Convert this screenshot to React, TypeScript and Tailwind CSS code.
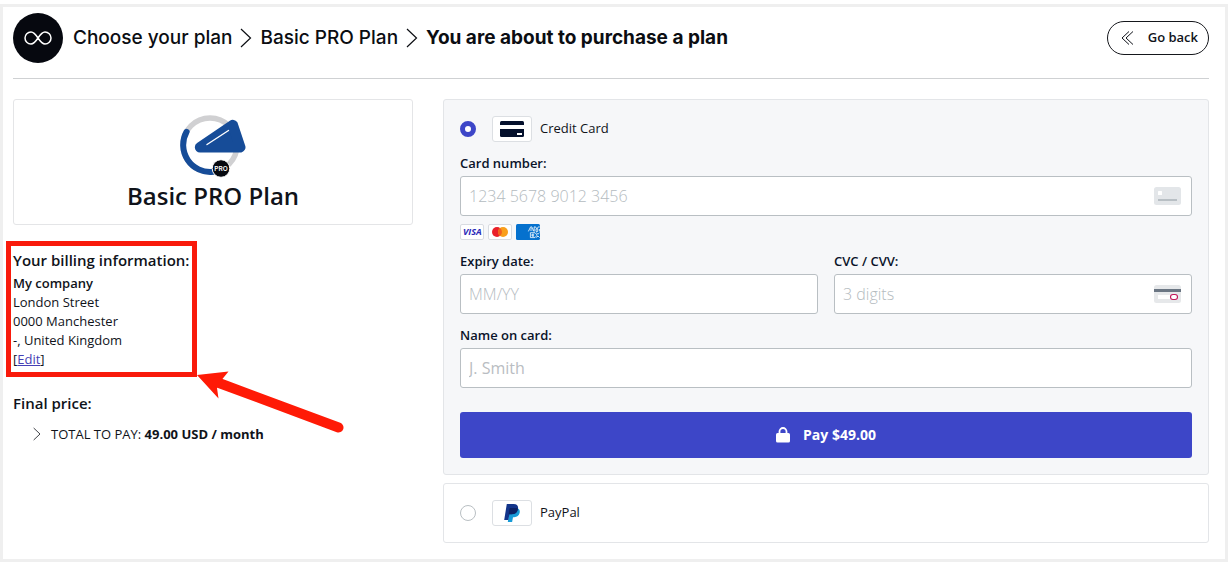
import type { ReactNode } from "react";

function ChevronRight({ className }: { className: string }) {
  return (
    <svg viewBox="0 0 12 20" fill="none" stroke="currentColor" strokeWidth="1.2" className={className} aria-hidden="true">
      <path d="M1 1 L10.5 10 L1 19" />
    </svg>
  );
}

function BrandMark() {
  return (
    <span className="flex size-[50px] shrink-0 items-center justify-center rounded-full bg-[#06080f]">
      <svg viewBox="0 0 28 14" fill="none" stroke="#fff" strokeWidth="1.5" className="w-7" aria-hidden="true">
        <path d="M14 7 C11.5 3.2 9.8 1 7 1 A6 6 0 0 0 7 13 C9.8 13 11.5 10.8 14 7 C16.5 3.2 18.2 1 21 1 A6 6 0 0 1 21 13 C18.2 13 16.5 10.8 14 7 Z" />
      </svg>
    </span>
  );
}

function PlanIcon() {
  return (
    <svg viewBox="0 0 66 63" className="h-[63px] w-[66px]" aria-hidden="true">
      <circle cx="30" cy="30" r="27" fill="none" stroke="#d0d0d2" strokeWidth="5.5" />
      <path d="M6.6 16.8 A27 27 0 0 0 33 56.8" fill="none" stroke="#164c98" strokeWidth="6" strokeLinecap="round" />
      <path d="M20 32.3 L52.8 10 L60.3 32.3 Z" fill="#164c98" stroke="#164c98" strokeWidth="10.4" strokeLinejoin="round" />
      <path d="M27 29.5 L48.5 15.5" stroke="#fff" strokeWidth="1.4" strokeLinecap="round" />
      <circle cx="41" cy="53.5" r="8.8" fill="#06080f" stroke="#fff" strokeWidth="1" />
      <text x="41" y="55.8" textAnchor="middle" fontSize="6.5" fontWeight="600" fill="#fff" fontFamily="Inter, sans-serif">
        PRO
      </text>
    </svg>
  );
}

function LogoBox({ children }: { children: ReactNode }) {
  return (
    <span className="ml-4 mr-2 flex h-[26px] w-10 items-center justify-center rounded-[3px] border border-[#dcdfe3] bg-white">
      {children}
    </span>
  );
}

function CardIcon() {
  return (
    <svg viewBox="0 0 24 16" className="h-4 w-6" aria-hidden="true">
      <path d="M0 4 V1.5 Q0 0 1.5 0 H22.5 Q24 0 24 1.5 V4 Z" fill="#04102c" />
      <path d="M0 8 H24 V14.5 Q24 16 22.5 16 H1.5 Q0 16 0 14.5 Z" fill="#04102c" />
      <rect x="17" y="12" width="5" height="2" fill="#fff" />
    </svg>
  );
}

function PayPalIcon() {
  return (
    <svg viewBox="0 0 16 18" className="h-[18px] w-4" aria-hidden="true">
      <path d="M5.8 4 H12.5 Q16.6 4.8 15.6 9 Q14.6 13 10.2 13.2 H9 L8.1 18 H3.8 Z" fill="#179bd7" />
      <path d="M2.8 0 H9.6 Q14.8 0.2 14 5 Q13 10.2 7.6 10.2 H5.4 L4.3 16 H0.2 Z" fill="#12348a" />
      <path d="M5.5 4.5 Q5.7 4 6.2 4 H12 Q13.4 4.2 14 4.7 Q13.2 10.2 7.6 10.2 H4.6 Z" fill="#0b2265" />
    </svg>
  );
}

function VisaLogo() {
  return (
    <svg viewBox="0 0 24 16" className="h-4 w-6" role="img" aria-label="Visa">
      <rect x="0.5" y="0.5" width="23" height="15" rx="1.5" fill="#fff" stroke="#d9dce1" />
      <text x="12.3" y="11.3" textAnchor="middle" fontSize="9" fontWeight="700" fontStyle="italic" fill="#2a2ab8" fontFamily="'Open Sans', sans-serif">
        VISA
      </text>
    </svg>
  );
}

function MastercardLogo() {
  return (
    <svg viewBox="0 0 24 16" className="h-4 w-6" role="img" aria-label="Mastercard">
      <rect x="0.5" y="0.5" width="23" height="15" rx="1.5" fill="#fff" stroke="#d9dce1" />
      <circle cx="9" cy="8" r="5" fill="#e9202a" />
      <circle cx="15" cy="8" r="5" fill="#f99f1b" />
      <path d="M12 4 A5 5 0 0 1 12 12 A5 5 0 0 1 12 4 Z" fill="#f26122" />
    </svg>
  );
}

function AmexLogo() {
  return (
    <svg viewBox="0 0 24 16" className="h-4 w-6" role="img" aria-label="American Express">
      <rect width="24" height="16" rx="1.5" fill="#0571ce" />
      <g fill="none" stroke="#fff" strokeWidth="0.8">
        <path d="M12.4 7.4 L14.6 2.9 H15.8 L18 7.4 M14 6 H16.6 M15.2 3.6 V5" />
        <path d="M18.2 7.4 V2.9 H19.6 L20.9 5.4 L22.2 2.9 H23.8 M20 5 V7.4 H21.8 V5 M23.6 5 V7.4" />
        <path d="M19 8.7 H14.4 V13.6 H19 M18.2 10.2 H16 V12.2 H18.2 M16 11.2 H18" />
        <path d="M19 8.7 L21.2 11.1 L19 13.6 M20.4 8.7 L22 10.2 L23.6 8.7 M20.4 13.6 L22 12 L23.6 13.6" />
      </g>
    </svg>
  );
}

function NumberHint() {
  return (
    <svg viewBox="0 0 27 18" className="h-[18px] w-[27px]" aria-hidden="true">
      <rect width="27" height="18" rx="2.5" fill="#e3e6e9" />
      <rect x="4" y="4" width="4" height="4" rx="0.6" fill="#fff" />
      <rect x="4" y="12" width="19" height="2" fill="#b8bfc4" />
    </svg>
  );
}

function CodeHint() {
  return (
    <svg viewBox="0 0 27 18" className="h-[18px] w-[27px]" aria-hidden="true">
      <rect width="27" height="18" rx="2.5" fill="#e6e8ea" />
      <rect y="4" width="27" height="3" fill="#6b7683" />
      <rect x="4" y="10" width="15" height="4" fill="#fff" />
      <rect x="16.5" y="9.5" width="7" height="5" rx="2.5" fill="#fff" stroke="#c2185b" strokeWidth="1.1" />
    </svg>
  );
}

type FieldProps = { id: string; label: string; placeholder: string; hint?: ReactNode; thin?: boolean };

function Field({ id, label, placeholder, hint, thin }: FieldProps) {
  return (
    <div className="mt-3">
      <label htmlFor={id} className="block text-[13px] leading-[18px] font-semibold text-[#0a1329]">
        {label}
      </label>
      <div className="mt-1 flex h-10 items-center rounded-[3px] border border-[#b9bfc3] bg-white pr-[10px] pl-2">
        <input
          id={id}
          placeholder={placeholder}
          className={
            thin
              ? "min-w-0 flex-1 bg-transparent text-base font-light outline-none placeholder:text-[#b4bbc0]"
              : "min-w-0 flex-1 bg-transparent text-base outline-none placeholder:text-[#b9bdc2]"
          }
        />
        {hint}
      </div>
    </div>
  );
}

const radioClass =
  "size-4 shrink-0 appearance-none rounded-full border border-[#b9bfc3] bg-white checked:border-[5px] checked:border-[#3d46c8]";

export default function App() {
  return (
    <div className="bg-white pt-1 font-['Open_Sans',sans-serif] text-[#10131a]">
      <main className="border-[3px] border-[#efefef] pt-[6px] pr-4 pb-4 pl-[10px]">
        <header className="flex items-center justify-between border-b border-[#cfd1d3] pb-[15px]">
          <nav aria-label="Breadcrumb" className="flex items-center font-['Inter',sans-serif] text-[19px] font-medium text-[#0b0d12]">
            <BrandMark />
            <a href="#plans" className="ml-[10px]">Choose your plan</a>
            <ChevronRight className="mx-2 h-5 w-3" />
            <a href="#basic-pro">Basic PRO Plan</a>
            <ChevronRight className="mx-2 h-5 w-3" />
            <span aria-current="page" className="font-bold">You are about to purchase a plan</span>
          </nav>
          <button type="button" className="flex h-[34px] items-center rounded-full border border-[#15171c] pr-[10px] pl-[13px] text-[13px] font-semibold">
            <svg viewBox="0 0 13 14" fill="none" stroke="currentColor" className="mr-[14px] h-[14px] w-[13px]" aria-hidden="true">
              <path d="M8 0.5 L1 7 L8 13.5 M12 0.5 L5 7 L12 13.5" />
            </svg>
            Go back
          </button>
        </header>

        <div className="mt-5 grid grid-cols-[400px_1fr] items-start gap-[30px]">
          <div>
            <section className="flex h-[126px] flex-col items-center rounded-[3px] border border-[#e4e5e7] pt-[15px]">
              <PlanIcon />
              <h1 className="text-2xl leading-9 font-semibold">Basic PRO Plan</h1>
            </section>

            <section className="relative mt-4 -ml-[7px] h-[136px] w-[191px] border-[5px] border-[#f91a0b] pt-1 pl-[2px] whitespace-nowrap">
              <h2 className="text-[15px] leading-5 font-semibold">Your billing information:</h2>
              <address className="mt-1 text-[13px] leading-[19px] not-italic">
                <strong className="block font-semibold">My company</strong>
                London Street
                <br />
                0000 Manchester
                <br />
                -, United Kingdom
                <br />
                [<a href="#edit" className="text-[#4540b5] underline">Edit</a>]
              </address>
              <svg viewBox="0 0 148 66" className="pointer-events-none absolute top-[124px] left-[186px] h-[66px] w-[148px]" aria-hidden="true">
                <path d="M0 5 L31.5 1.5 L25 9.5 L20 18 L21.5 28.5 Z" fill="#ff1a06" />
                <path d="M20 12.2 L141.5 57.5" stroke="#ff1a06" strokeWidth="10" strokeLinecap="round" />
              </svg>
            </section>

            <section className="mt-4">
              <h2 className="text-[15px] leading-5 font-semibold">Final price:</h2>
              <button type="button" className="mt-[11px] ml-5 flex items-center text-[13px] leading-5">
                <ChevronRight className="mr-[10px] h-[14px] w-2" />
                <span>
                  TOTAL TO PAY: <strong>49.00 USD / month</strong>
                </span>
              </button>
            </section>
          </div>

          <form className="flex flex-col gap-2">
            <section className="rounded-[3px] border border-[#e3e5e8] bg-[#f6f7f9] p-4">
              <label className="flex items-center text-[13px]">
                <input type="radio" name="method" defaultChecked className={radioClass} />
                <LogoBox>
                  <CardIcon />
                </LogoBox>
                Credit Card
              </label>
              <Field id="number" label="Card number:" placeholder="1234 5678 9012 3456" hint={<NumberHint />} thin />
              <div className="mt-2 flex gap-1">
                <VisaLogo />
                <MastercardLogo />
                <AmexLogo />
              </div>
              <div className="grid grid-cols-2 gap-4">
                <Field id="expiry" label="Expiry date:" placeholder="MM/YY" thin />
                <Field id="cvc" label="CVC / CVV:" placeholder="3 digits" hint={<CodeHint />} thin />
              </div>
              <Field id="name" label="Name on card:" placeholder="J. Smith" />
              <button type="button" className="mt-6 flex h-[46px] w-full items-center justify-center gap-[13px] rounded-[3px] bg-[#3d46c8] text-sm font-bold text-white">
                <svg viewBox="0 0 14 16" className="h-4 w-[14px]" aria-hidden="true">
                  <path d="M3.5 7 V4.5 A3.5 3.5 0 0 1 10.5 4.5 V7" fill="none" stroke="#fff" strokeWidth="1.8" />
                  <rect y="6" width="14" height="9.5" rx="1.6" fill="#fff" />
                </svg>
                Pay $49.00
              </button>
            </section>

            <section className="rounded-[3px] border border-[#e3e5e8] p-4">
              <label className="flex items-center text-[13px]">
                <input type="radio" name="method" className={radioClass} />
                <LogoBox>
                  <PayPalIcon />
                </LogoBox>
                PayPal
              </label>
            </section>
          </form>
        </div>
      </main>
    </div>
  );
}
